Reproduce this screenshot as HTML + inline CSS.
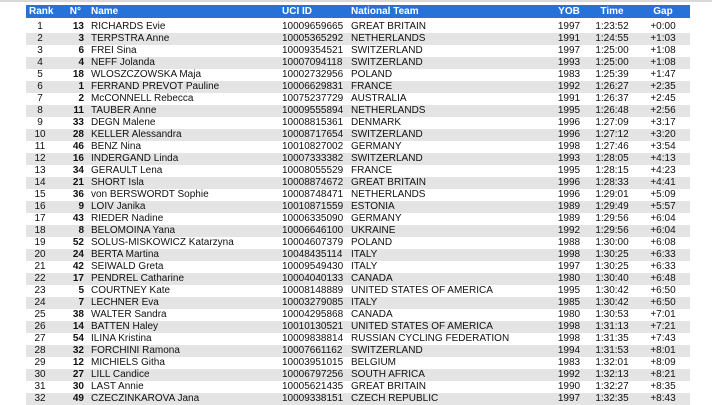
<!DOCTYPE html>
<html><head><meta charset="utf-8"><style>
html,body{margin:0;padding:0;background:#fff;width:712px;height:405px;overflow:hidden}
body{font-family:"Liberation Sans",Arial,sans-serif;font-size:10px;color:#111;position:relative}
.topline{position:absolute;left:0;top:0;width:712px;height:2px;background:#d8d8d8}
table{position:absolute;left:26px;top:5px;border-collapse:collapse;table-layout:fixed;width:664px}
td,th{padding:0;height:12px;line-height:12px;white-space:nowrap;overflow:hidden}
th{background:#2672d9;color:#fff;font-weight:bold;text-align:left;height:13px;line-height:13px}
tr.g td{background:#e4e4e4}
tbody tr:first-child td{padding-top:3px}
.c1{text-align:center}
.c2{text-align:right;padding-right:1px;font-weight:bold}
.c3{padding-left:6px}
.c4{padding-left:4px}
.c5{padding-left:5px}
.c6,.c7,.c8{text-align:center}
</style></head><body>
<div class="topline"></div>
<table>
<colgroup><col style="width:28px"><col style="width:31px"><col style="width:193px"><col style="width:68px"><col style="width:204px"><col style="width:38px"><col style="width:48px"><col style="width:54px"></colgroup>
<thead><tr><th style="padding-left:3px">Rank</th><th class="c2" style="padding-right:4px">N°</th><th class="c3">Name</th><th class="c4">UCI ID</th><th class="c5">National Team</th><th class="c6">YOB</th><th class="c7">Time</th><th class="c8">Gap</th></tr></thead>
<tbody>
<tr><td class="c1">1</td><td class="c2">13</td><td class="c3">RICHARDS Evie</td><td class="c4">10009659665</td><td class="c5">GREAT BRITAIN</td><td class="c6">1997</td><td class="c7">1:23:52</td><td class="c8">+0:00</td></tr>
<tr class="g"><td class="c1">2</td><td class="c2">3</td><td class="c3">TERPSTRA Anne</td><td class="c4">10005365292</td><td class="c5">NETHERLANDS</td><td class="c6">1991</td><td class="c7">1:24:55</td><td class="c8">+1:03</td></tr>
<tr><td class="c1">3</td><td class="c2">6</td><td class="c3">FREI Sina</td><td class="c4">10009354521</td><td class="c5">SWITZERLAND</td><td class="c6">1997</td><td class="c7">1:25:00</td><td class="c8">+1:08</td></tr>
<tr class="g"><td class="c1">4</td><td class="c2">4</td><td class="c3">NEFF Jolanda</td><td class="c4">10007094118</td><td class="c5">SWITZERLAND</td><td class="c6">1993</td><td class="c7">1:25:00</td><td class="c8">+1:08</td></tr>
<tr><td class="c1">5</td><td class="c2">18</td><td class="c3">WLOSZCZOWSKA Maja</td><td class="c4">10002732956</td><td class="c5">POLAND</td><td class="c6">1983</td><td class="c7">1:25:39</td><td class="c8">+1:47</td></tr>
<tr class="g"><td class="c1">6</td><td class="c2">1</td><td class="c3">FERRAND PREVOT Pauline</td><td class="c4">10006629831</td><td class="c5">FRANCE</td><td class="c6">1992</td><td class="c7">1:26:27</td><td class="c8">+2:35</td></tr>
<tr><td class="c1">7</td><td class="c2">2</td><td class="c3">McCONNELL Rebecca</td><td class="c4">10075237729</td><td class="c5">AUSTRALIA</td><td class="c6">1991</td><td class="c7">1:26:37</td><td class="c8">+2:45</td></tr>
<tr class="g"><td class="c1">8</td><td class="c2">11</td><td class="c3">TAUBER Anne</td><td class="c4">10009555894</td><td class="c5">NETHERLANDS</td><td class="c6">1995</td><td class="c7">1:26:48</td><td class="c8">+2:56</td></tr>
<tr><td class="c1">9</td><td class="c2">33</td><td class="c3">DEGN Malene</td><td class="c4">10008815361</td><td class="c5">DENMARK</td><td class="c6">1996</td><td class="c7">1:27:09</td><td class="c8">+3:17</td></tr>
<tr class="g"><td class="c1">10</td><td class="c2">28</td><td class="c3">KELLER Alessandra</td><td class="c4">10008717654</td><td class="c5">SWITZERLAND</td><td class="c6">1996</td><td class="c7">1:27:12</td><td class="c8">+3:20</td></tr>
<tr><td class="c1">11</td><td class="c2">46</td><td class="c3">BENZ Nina</td><td class="c4">10010827002</td><td class="c5">GERMANY</td><td class="c6">1998</td><td class="c7">1:27:46</td><td class="c8">+3:54</td></tr>
<tr class="g"><td class="c1">12</td><td class="c2">16</td><td class="c3">INDERGAND Linda</td><td class="c4">10007333382</td><td class="c5">SWITZERLAND</td><td class="c6">1993</td><td class="c7">1:28:05</td><td class="c8">+4:13</td></tr>
<tr><td class="c1">13</td><td class="c2">34</td><td class="c3">GERAULT Lena</td><td class="c4">10008055529</td><td class="c5">FRANCE</td><td class="c6">1995</td><td class="c7">1:28:15</td><td class="c8">+4:23</td></tr>
<tr class="g"><td class="c1">14</td><td class="c2">21</td><td class="c3">SHORT Isla</td><td class="c4">10008874672</td><td class="c5">GREAT BRITAIN</td><td class="c6">1996</td><td class="c7">1:28:33</td><td class="c8">+4:41</td></tr>
<tr><td class="c1">15</td><td class="c2">36</td><td class="c3">von BERSWORDT Sophie</td><td class="c4">10008748471</td><td class="c5">NETHERLANDS</td><td class="c6">1996</td><td class="c7">1:29:01</td><td class="c8">+5:09</td></tr>
<tr class="g"><td class="c1">16</td><td class="c2">9</td><td class="c3">LOIV Janika</td><td class="c4">10010871559</td><td class="c5">ESTONIA</td><td class="c6">1989</td><td class="c7">1:29:49</td><td class="c8">+5:57</td></tr>
<tr><td class="c1">17</td><td class="c2">43</td><td class="c3">RIEDER Nadine</td><td class="c4">10006335090</td><td class="c5">GERMANY</td><td class="c6">1989</td><td class="c7">1:29:56</td><td class="c8">+6:04</td></tr>
<tr class="g"><td class="c1">18</td><td class="c2">8</td><td class="c3">BELOMOINA Yana</td><td class="c4">10006646100</td><td class="c5">UKRAINE</td><td class="c6">1992</td><td class="c7">1:29:56</td><td class="c8">+6:04</td></tr>
<tr><td class="c1">19</td><td class="c2">52</td><td class="c3">SOLUS-MISKOWICZ Katarzyna</td><td class="c4">10004607379</td><td class="c5">POLAND</td><td class="c6">1988</td><td class="c7">1:30:00</td><td class="c8">+6:08</td></tr>
<tr class="g"><td class="c1">20</td><td class="c2">24</td><td class="c3">BERTA Martina</td><td class="c4">10048435114</td><td class="c5">ITALY</td><td class="c6">1998</td><td class="c7">1:30:25</td><td class="c8">+6:33</td></tr>
<tr><td class="c1">21</td><td class="c2">42</td><td class="c3">SEIWALD Greta</td><td class="c4">10009549430</td><td class="c5">ITALY</td><td class="c6">1997</td><td class="c7">1:30:25</td><td class="c8">+6:33</td></tr>
<tr class="g"><td class="c1">22</td><td class="c2">17</td><td class="c3">PENDREL Catharine</td><td class="c4">10004040133</td><td class="c5">CANADA</td><td class="c6">1980</td><td class="c7">1:30:40</td><td class="c8">+6:48</td></tr>
<tr><td class="c1">23</td><td class="c2">5</td><td class="c3">COURTNEY Kate</td><td class="c4">10008148889</td><td class="c5">UNITED STATES OF AMERICA</td><td class="c6">1995</td><td class="c7">1:30:42</td><td class="c8">+6:50</td></tr>
<tr class="g"><td class="c1">24</td><td class="c2">7</td><td class="c3">LECHNER Eva</td><td class="c4">10003279085</td><td class="c5">ITALY</td><td class="c6">1985</td><td class="c7">1:30:42</td><td class="c8">+6:50</td></tr>
<tr><td class="c1">25</td><td class="c2">38</td><td class="c3">WALTER Sandra</td><td class="c4">10004295868</td><td class="c5">CANADA</td><td class="c6">1980</td><td class="c7">1:30:53</td><td class="c8">+7:01</td></tr>
<tr class="g"><td class="c1">26</td><td class="c2">14</td><td class="c3">BATTEN Haley</td><td class="c4">10010130521</td><td class="c5">UNITED STATES OF AMERICA</td><td class="c6">1998</td><td class="c7">1:31:13</td><td class="c8">+7:21</td></tr>
<tr><td class="c1">27</td><td class="c2">54</td><td class="c3">ILINA Kristina</td><td class="c4">10009838814</td><td class="c5">RUSSIAN CYCLING FEDERATION</td><td class="c6">1998</td><td class="c7">1:31:35</td><td class="c8">+7:43</td></tr>
<tr class="g"><td class="c1">28</td><td class="c2">32</td><td class="c3">FORCHINI Ramona</td><td class="c4">10007661162</td><td class="c5">SWITZERLAND</td><td class="c6">1994</td><td class="c7">1:31:53</td><td class="c8">+8:01</td></tr>
<tr><td class="c1">29</td><td class="c2">12</td><td class="c3">MICHIELS Githa</td><td class="c4">10003951015</td><td class="c5">BELGIUM</td><td class="c6">1983</td><td class="c7">1:32:01</td><td class="c8">+8:09</td></tr>
<tr class="g"><td class="c1">30</td><td class="c2">27</td><td class="c3">LILL Candice</td><td class="c4">10006797256</td><td class="c5">SOUTH AFRICA</td><td class="c6">1992</td><td class="c7">1:32:13</td><td class="c8">+8:21</td></tr>
<tr><td class="c1">31</td><td class="c2">30</td><td class="c3">LAST Annie</td><td class="c4">10005621435</td><td class="c5">GREAT BRITAIN</td><td class="c6">1990</td><td class="c7">1:32:27</td><td class="c8">+8:35</td></tr>
<tr class="g"><td class="c1">32</td><td class="c2">49</td><td class="c3">CZECZINKAROVA Jana</td><td class="c4">10009338151</td><td class="c5">CZECH REPUBLIC</td><td class="c6">1997</td><td class="c7">1:32:35</td><td class="c8">+8:43</td></tr>
</tbody></table>
</body></html>
